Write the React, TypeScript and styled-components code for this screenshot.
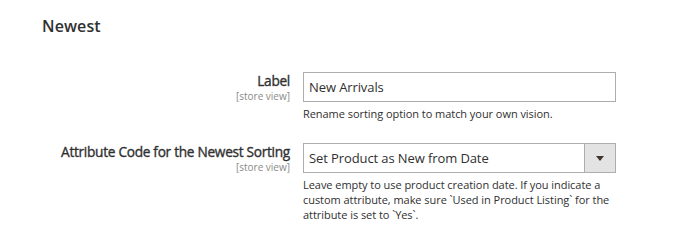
import React from "react";
import styled, { createGlobalStyle } from "styled-components";

const Global = createGlobalStyle`
  html, body { margin: 0; padding: 0; background: #fff; }
  body { font-family: "Open Sans", "Noto Sans", sans-serif; color: #303030; }
`;

const Page = styled.div`
  width: 684px;
  height: 245px;
  box-sizing: border-box;
  padding: 15px 0 0 42px;
  background: #fff;
`;

const Title = styled.h2`
  margin: 0 0 35px 0;
  font-size: 16px;
  line-height: 22px;
  font-weight: 600;
  color: #303030;
  letter-spacing: 0.1px;
`;

const Row = styled.div<{ $mb?: number }>`
  display: grid;
  grid-template-columns: 248px 313px;
  column-gap: 13px;
  margin-bottom: ${(p) => p.$mb ?? 0}px;
`;

const LabelCol = styled.div`
  display: flex;
  flex-direction: column;
  align-items: flex-end;
  text-align: right;
  margin-top: -1px;
  white-space: nowrap;
`;

const LabelText = styled.span`
  font-size: 13.7px;
  line-height: 19px;
  font-weight: 400;
  -webkit-text-stroke: 0.35px #303030;
  color: #303030;
  letter-spacing: -0.3px;
`;

const Scope = styled.span`
  font-size: 10px;
  line-height: 14px;
  margin-top: -1px;
  color: #8a8a8a;
`;

const Control = styled.div`
  display: flex;
  flex-direction: column;
`;

const Input = styled.div`
  box-sizing: border-box;
  height: 30px;
  border: 1px solid #adadad;
  padding: 0 0 0 5px;
  display: flex;
  align-items: center;
  font-size: 13px;
  color: #303030;
  letter-spacing: -0.1px;
`;

const Select = styled.div`
  box-sizing: border-box;
  height: 30px;
  border: 1px solid #adadad;
  display: flex;
  align-items: stretch;
  font-size: 13px;
  color: #303030;
  letter-spacing: -0.1px;
`;

const SelectValue = styled.div`
  flex: 1;
  display: flex;
  align-items: center;
  padding-left: 5px;
`;

const ArrowBox = styled.div`
  width: 30px;
  background: #e3e3e3;
  border-left: 1px solid #adadad;
  display: flex;
  align-items: center;
  justify-content: center;
`;

const Arrow = styled.span`
  width: 0;
  height: 0;
  border-left: 4px solid transparent;
  border-right: 4px solid transparent;
  border-top: 5px solid #41362f;
`;

const Note = styled.div`
  margin-top: 4px;
  font-size: 11px;
  line-height: 15px;
  color: #303030;
  letter-spacing: -0.05px;
`;

export default function App() {
  return (
    <>
      <Global />
      <Page>
        <Title>Newest</Title>
        <Row $mb={22}>
          <LabelCol>
            <LabelText>Label</LabelText>
            <Scope>[store view]</Scope>
          </LabelCol>
          <Control>
            <Input>New Arrivals</Input>
            <Note>Rename sorting option to match your own vision.</Note>
          </Control>
        </Row>
        <Row>
          <LabelCol>
            <LabelText>Attribute Code for the Newest Sorting</LabelText>
            <Scope>[store view]</Scope>
          </LabelCol>
          <Control>
            <Select>
              <SelectValue>Set Product as New from Date</SelectValue>
              <ArrowBox>
                <Arrow />
              </ArrowBox>
            </Select>
            <Note>
              Leave empty to use product creation date. If you indicate a custom attribute, make sure `Used in Product Listing` for the attribute is set to `Yes`.
            </Note>
          </Control>
        </Row>
      </Page>
    </>
  );
}
